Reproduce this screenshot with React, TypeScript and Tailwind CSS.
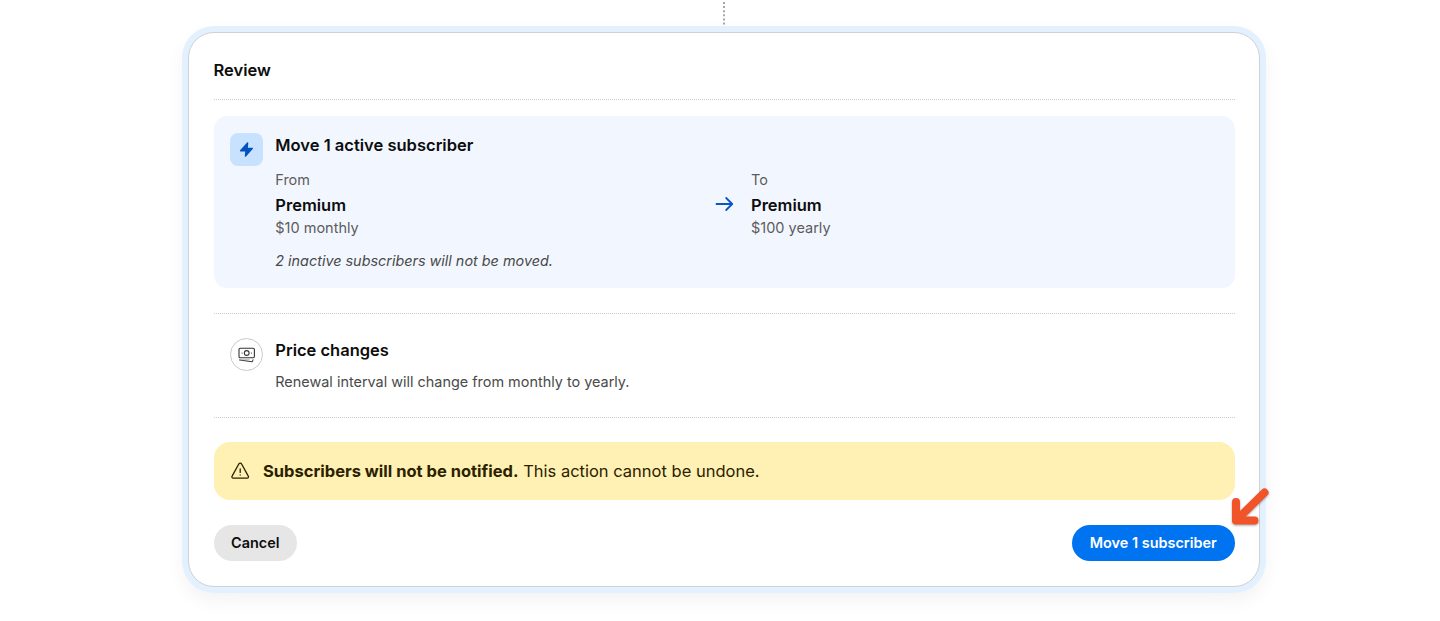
import React from "react";

function Bolt() {
  return (
    <svg width="17" height="17" viewBox="0 0 17 17" fill="#0052c2" stroke="#0052c2" strokeWidth="1.4" strokeLinejoin="round">
      <path d="M9.6 2 L2.6 9.7 H8 L7.5 15.1 L14.4 7.4 H9.1 Z" />
    </svg>
  );
}

function ArrowRight() {
  return (
    <svg width="20" height="20" viewBox="0 0 20 20" fill="none" stroke="#0a56c2" strokeWidth="1.8" strokeLinecap="round" strokeLinejoin="round">
      <path d="M2.5 10 H18 M12.2 4 L18.2 10 L12.2 16" />
    </svg>
  );
}

function Money() {
  return (
    <svg width="18" height="18" viewBox="0 0 18 18" fill="none" stroke="#333333" strokeWidth="1.1" strokeLinecap="round" strokeLinejoin="round">
      <rect x="1" y="2.2" width="15.4" height="9.6" rx="1.2" />
      <circle cx="8.7" cy="7" r="2.4" />
      <path d="M4 7 H4.1 M13.4 7 H13.5" />
      <path d="M1.6 14 L14.4 15.8 L15 13.8" strokeWidth="1" />
      <path d="M1.6 14 L11 13.6" stroke="#8a8a8a" strokeWidth="0.6" />
    </svg>
  );
}

function Warning() {
  return (
    <svg width="20" height="20" viewBox="0 0 20 20" fill="none" stroke="#2b2100" strokeWidth="1.3" strokeLinecap="round" strokeLinejoin="round">
      <path d="M8.8 3 L2.1 15.1 A1.35 1.35 0 0 0 3.3 17.2 H17.1 A1.35 1.35 0 0 0 18.3 15.1 L11.6 3 A1.6 1.6 0 0 0 8.8 3 Z" />
      <path d="M10.2 8 V11.4 M10.2 13.9 V14" />
    </svg>
  );
}

function Divider() {
  return (
    <svg className="block h-px w-full shrink-0" fill="none">
      <line x1="0" y1="0.5" x2="100%" y2="0.5" stroke="#cccccc" strokeDasharray="1 1" />
    </svg>
  );
}

function Tier({ label, price }: { label: string; price: string }) {
  return (
    <div className="flex flex-col">
      <span className="text-[14.45px] leading-5 text-[#5c5c5c]">{label}</span>
      <span className="mt-[3px] text-[16.5px] leading-6 font-semibold">Premium</span>
      <span className="mt-px text-[14.5px] leading-5 text-[#5c5c5c]">{price}</span>
    </div>
  );
}

export default function App() {
  return (
    <div className="flex h-[621px] flex-col overflow-hidden bg-white font-['Inter',sans-serif] text-[#0d0d0d] antialiased">
      <svg className="ml-[723px] block h-[26px] w-[2px] shrink-0" fill="none">
        <line x1="1" y1="2" x2="1" y2="25" stroke="#a8a8a8" strokeWidth="2" strokeDasharray="2 2.1" />
      </svg>
      <main className="relative ml-[188px] mt-[5.5px] flex h-[555.5px] w-[1072px] shrink-0 flex-col rounded-[26px] border border-[#cfd2d5] bg-white px-[24.5px] shadow-[0_0_0_6px_#e3f1ff,0_8px_20px_4px_rgba(0,0,0,0.06)]">
        <h1 className="mt-[25px] mb-[17px] text-[16.5px] leading-6 font-semibold">Review</h1>
        <Divider />
        <section className="mt-[16.5px] flex h-[171.5px] shrink-0 rounded-[13px] bg-[#f2f7ff] pl-[16.5px] pt-[16.5px]">
          <div className="flex h-[33px] w-[33px] items-center justify-center rounded-lg bg-[#c7e1ff]">
            <Bolt />
          </div>
          <div className="ml-[12.3px] flex flex-col">
            <h2 className="text-[16.55px] leading-6 font-semibold">Move 1 active subscriber</h2>
            <div className="mt-[13px] flex">
              <div className="w-[438.7px]">
                <Tier label="From" price="$10 monthly" />
              </div>
              <div className="mt-[24.5px] mr-[17px] h-5 w-5">
                <ArrowRight />
              </div>
              <Tier label="To" price="$100 yearly" />
            </div>
            <p className="mt-[13px] text-[14.4px] leading-5 text-[#4a4a4a] italic">2 inactive subscribers will not be moved.</p>
          </div>
        </section>
        <div className="mt-[25px]">
          <Divider />
        </div>
        <section className="mt-[24.5px] flex h-[78.5px] shrink-0 pl-[16.5px]">
          <div className="flex h-[33px] w-[33px] items-center justify-center rounded-full border border-[#c9c9c9]">
            <Money />
          </div>
          <div className="ml-[12.3px]">
            <h2 className="text-[16.5px] leading-6 font-semibold">Price changes</h2>
            <p className="mt-[9.5px] text-[14.43px] leading-5 text-[#4a4a4a]">Renewal interval will change from monthly to yearly.</p>
          </div>
        </section>
        <Divider />
        <div className="mt-[24.5px] flex h-[57.5px] shrink-0 items-center gap-[13px] rounded-[16px] bg-[#fff0b3] pl-[16.5px] text-[16.5px] leading-6 text-[#2b2100]">
          <Warning />
          <p><strong className="font-bold">Subscribers will not be notified.</strong> This action cannot be undone.</p>
        </div>
        <div className="mt-[25px] flex h-[36.5px] shrink-0 justify-between text-[14.45px] font-semibold">
          <button className="w-[83.5px] rounded-full bg-[#e6e6e6] pt-px">Cancel</button>
          <button className="w-[162.5px] rounded-full bg-[#0073f0] pt-px text-white">Move 1 subscriber</button>
        </div>
        <svg className="absolute top-[450px] left-[1038px] overflow-visible drop-shadow-[0_1px_1px_rgba(0,0,0,0.35)]" width="46" height="46" fill="none" stroke="#f15428" strokeWidth="8" strokeLinecap="round" strokeLinejoin="round">
          <path d="M37.5 9.5 L9 37.5 M9 19 V37.5 H27.5" />
        </svg>
      </main>
    </div>
  );
}
